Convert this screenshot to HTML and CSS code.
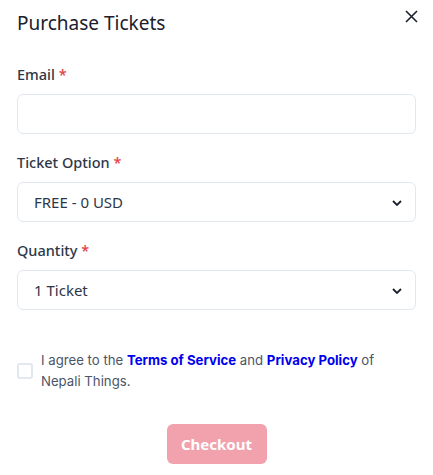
FILE: index.html
```html
<!DOCTYPE html>
<html lang="en">
<head>
<meta charset="utf-8">
<title>Purchase Tickets</title>
<link rel="stylesheet" href="styles.css">
</head>
<body>
<div class="modal">
  <div class="header">
    <h1 class="title">Purchase Tickets</h1>
    <button class="close" aria-label="Close">
      <svg width="13" height="13" viewBox="0 0 13 13"><path d="M1 1L12 12M12 1L1 12" stroke="#1a202c" stroke-width="1.6" fill="none"/></svg>
    </button>
  </div>
  <div class="field">
    <label class="label">Email <span class="req">*</span></label>
    <div class="input"></div>
  </div>
  <div class="field">
    <label class="label">Ticket Option <span class="req">*</span></label>
    <div class="input select">
      <span>FREE - 0 USD</span>
      <svg class="chev" width="10" height="6" viewBox="0 0 10 6"><path d="M1 1L5 5L9 1" stroke="#1a202c" stroke-width="1.8" fill="none"/></svg>
    </div>
  </div>
  <div class="field">
    <label class="label">Quantity <span class="req">*</span></label>
    <div class="input select">
      <span>1 Ticket</span>
      <svg class="chev" width="10" height="6" viewBox="0 0 10 6"><path d="M1 1L5 5L9 1" stroke="#1a202c" stroke-width="1.8" fill="none"/></svg>
    </div>
  </div>
  <div class="agree">
    <span class="checkbox"></span>
    <p class="agree-text">I agree to the <a class="link">Terms of Service</a> and <a class="link">Privacy Policy</a> of Nepali Things.</p>
  </div>
  <div class="actions">
    <button class="checkout">Checkout</button>
  </div>
</div>
</body>
</html>
```
FILE: styles.css
```css
* { box-sizing: border-box; }
body {
  margin: 0;
  background: #fff;
  font-family: "Noto Sans", "Open Sans", sans-serif;
  color: #2d3748;
}
.modal {
  padding: 0 17px;
  width: 433px;
}
.header {
  display: flex;
  justify-content: space-between;
  align-items: flex-start;
}
.title {
  margin: 10px 0 0;
  font-size: 19px;
  font-weight: 400;
  line-height: 26px;
  color: #1a202c;
}
.close {
  border: 0;
  background: none;
  padding: 0;
  margin: 10px -2px 0 0;
  width: 13px;
  height: 13px;
  display: flex;
}
.field {
  margin-top: 28px;
}
.field + .field { margin-top: 18px; }
.label {
  display: block;
  font-size: 14.5px;
  font-weight: 500;
  line-height: 20px;
  margin-bottom: 10px;
  color: #2d3748;
}
.req { color: #e53e3e; }
.input {
  height: 40px;
  border: 1px solid #e2e8f0;
  border-radius: 6px;
}
.select {
  display: flex;
  align-items: center;
  justify-content: space-between;
  padding: 0 13px 0 16px;
  font-size: 15px;
  color: #2d3748;
}
.chev { margin-top: 1px; }
.agree {
  display: flex;
  align-items: center;
  gap: 8px;
  margin-top: 40px;
}
.checkbox {
  width: 16px;
  height: 16px;
  border: 2px solid #e2e8f0;
  border-radius: 3px;
  flex: none;
}
.agree-text {
  margin: 0;
  max-width: 340px;
  font-family: Inter, sans-serif;
  font-size: 13.2px;
  line-height: 21px;
  color: #4a5568;
}
.link {
  color: #0000ee;
  font-weight: 700;
}
.actions {
  display: flex;
  justify-content: center;
  margin-top: 32px;
}
.checkout {
  width: 100px;
  height: 40px;
  border: 0;
  border-radius: 6px;
  background: #f1a2ad;
  color: #fff;
  font-family: "Noto Sans", sans-serif;
  font-size: 15px;
  font-weight: 700;
}
```
